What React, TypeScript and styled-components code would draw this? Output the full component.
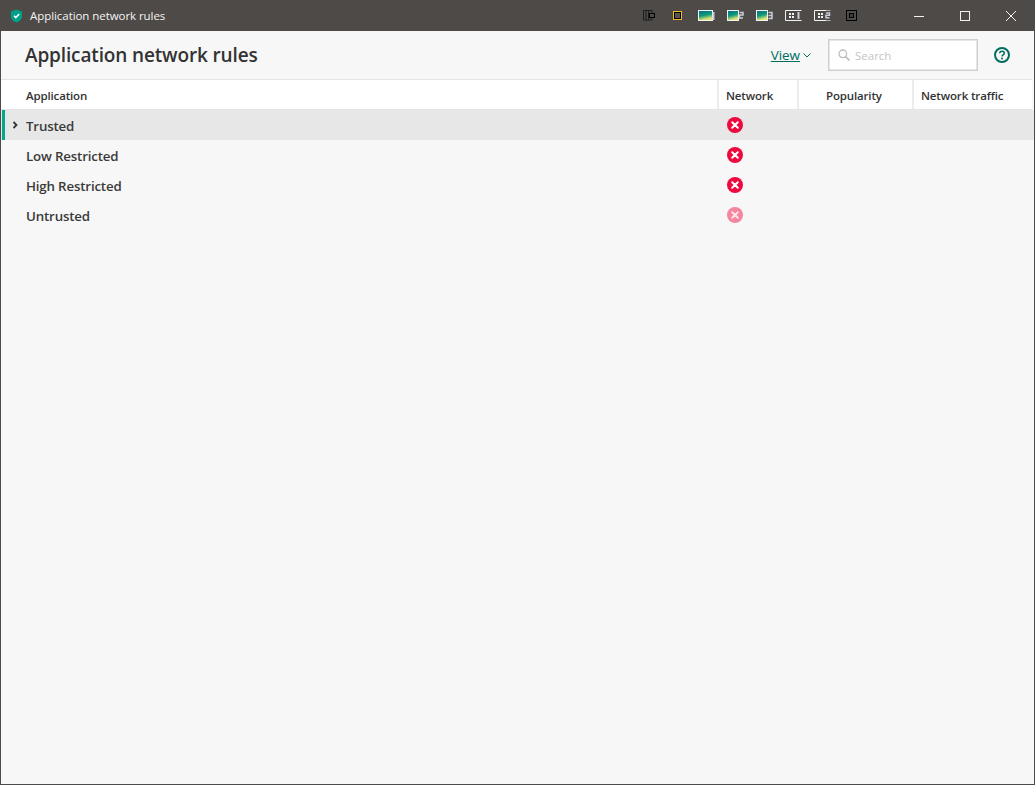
import React from "react";
import styled, { createGlobalStyle } from "styled-components";

const Global = createGlobalStyle`
  html, body { margin: 0; padding: 0; height: 100%; background: #f7f7f7; }
  #root { height: 100%; }
  * { box-sizing: border-box; }
`;

const Win = styled.div`
  width: 1035px;
  height: 785px;
  display: flex;
  flex-direction: column;
  background: #f7f7f7;
  border: 1px solid #4d4a47;
  border-top: 0;
  font-family: "Open Sans", "Noto Sans", sans-serif;
  color: #333;
  overflow: hidden;
`;

const TitleBar = styled.div`
  height: 31px;
  flex: none;
  background: #4d4a47;
  display: flex;
  align-items: center;
  padding-left: 9px;
  color: #f4f4f4;
`;

const TitleText = styled.span`
  margin-left: 7px;
  font-size: 11.5px;
  letter-spacing: -0.06px;
`;

const Tray = styled.div`
  margin-left: auto;
  display: flex;
  align-items: center;
`;

const TraySlot = styled.div`
  width: 29px;
  height: 31px;
  display: flex;
  align-items: center;
  justify-content: center;
`;

const Controls = styled.div`
  margin-left: 30px;
  display: flex;
`;

const ControlBtn = styled.div`
  width: 46px;
  height: 31px;
  display: flex;
  align-items: center;
  justify-content: center;
`;

const Header = styled.div`
  height: 48px;
  flex: none;
  display: flex;
  align-items: center;
  padding-left: 24px;
  padding-right: 24px;
`;

const Heading = styled.h1`
  margin: 0;
  font-size: 19px;
  font-weight: 600;
  letter-spacing: -0.14px;
  color: #333;
`;

const ViewLink = styled.a`
  margin-left: auto;
  font-size: 13.5px;
  color: #006d5f;
  text-decoration: underline;
  letter-spacing: -0.05px;
`;

const ViewChevron = styled.svg`
  margin-left: 3px;
  margin-right: 17px;
`;

const SearchBox = styled.div`
  width: 150px;
  height: 32px;
  background: #fff;
  border: 1px solid #cfcfcf;
  box-shadow: inset 0 0 0 0.5px #cfcfcf;
  display: flex;
  align-items: center;
  padding-left: 9px;
  gap: 5px;
  font-size: 11.5px;
  color: #c4c4c4;
`;

const HelpIcon = styled.svg`
  margin-left: 16px;
`;

const TableHead = styled.div`
  flex: none;
  height: 31px;
  display: flex;
  background: #fff;
  border-top: 1px solid #e4e4e4;
  border-bottom: 1px solid #e4e4e4;
  margin-right: 2px;
  font-size: 11.5px;
  font-weight: 600;
  letter-spacing: -0.15px;
`;

const HeadCell = styled.div<{ $w?: number; $pad?: number }>`
  ${(p) => (p.$w ? `width: ${p.$w}px; flex: none; border-left: 2px solid #ececec;` : "flex: 1;")}
  display: flex;
  align-items: center;
  padding-top: 1px;
  padding-left: ${(p) => p.$pad ?? 7}px;
`;

const Row = styled.div<{ $selected?: boolean }>`
  height: 30px;
  display: flex;
  align-items: center;
  background: ${(p) => (p.$selected ? "#e7e7e7" : "transparent")};
  padding-left: ${(p) => (p.$selected ? 1 : 25)}px;
`;

const Accent = styled.div`
  width: 3px;
  height: 30px;
  background: #00a88e;
  flex: none;
`;

const Chevron = styled.svg`
  margin-left: 7px;
  margin-right: 8px;
  flex: none;
`;

const RowName = styled.span`
  flex: 1;
  padding-top: 2px;
  font-size: 13.3px;
  font-weight: 600;
  letter-spacing: -0.17px;
  color: #3a3a3a;
`;

const StatusCell = styled.div`
  width: 316px;
  flex: none;
  padding-left: 9px;
  display: flex;
  align-items: center;
  margin-top: -1px;
`;

const DenyIcon = ({ faded }: { faded?: boolean }) => (
  <svg width="16" height="16" viewBox="0 0 16 16">
    <circle cx="8" cy="8" r="8" fill={faded ? "#f5859f" : "#ee0a3f"} />
    <path d="M5.200 5.200l5.600 5.600M10.800 5.200l-5.600 5.600" stroke={faded ? "#fbe3e8" : "#fff"} strokeWidth="2" strokeLinecap="round" />
  </svg>
);

const Shield = () => (
  <svg width="13" height="14" viewBox="0 0 13 14">
    <path d="M6.500 0.500L12 2.500V8c0 2.500-2.500 4.200-5.500 5.500C3.500 12.200 1 10.500 1 8V2.500z" fill="#00a088" />
    <path d="M4 6.800l1.800 1.800L9.200 5" stroke="#fff" strokeWidth="1.500" fill="none" />
  </svg>
);

const Photo = ({ n }: { n: number }) => {
  const w = n === 1 ? 13 : 10;
  const id = `ph${n}`;
  return (
    <svg width="17" height="11" viewBox="0 0 17 11">
      <defs>
        <linearGradient id={id} x1="0" y1="0" x2="0.3" y2="1">
          <stop offset="0" stopColor="#0b6f86" />
          <stop offset="0.55" stopColor="#0f9a78" />
          <stop offset="1" stopColor="#e4e676" />
        </linearGradient>
      </defs>
      <rect x="0" y="0" width={w + 2} height="11" fill="#f3f3f6" />
      <rect x="1" y="1" width={w} height="9" fill={`url(#${id})`} />
      {n === 1 ? (
        <path d="M15.500 2v8" stroke="#c9cdd8" strokeWidth="2" />
      ) : n === 2 ? (
        <path d="M12.500 2.500h3.500v2.500h-3.500v3h3.500" stroke="#c9cdd8" strokeWidth="1.500" fill="none" />
      ) : (
        <path d="M12.500 2.500h3.500v6h-3.500M12.500 5.500h3.500" stroke="#c9cdd8" strokeWidth="1.500" fill="none" />
      )}
    </svg>
  );
};

const GridTile = ({ n }: { n: number }) => (
  <svg width="17" height="11" viewBox="0 0 17 11">
    <path d="M12 0.500H0.500v10H12" fill="none" stroke="#f2f2f2" />
    <path d="M12 0.500h4.500M12 10.500h4.500" stroke="#f2f2f2" opacity={n === 1 ? 1 : 0.6} />
    <path d="M4 3h2v2H4zM7 3h2v2H7zM4 6h2v2H4zM7 6h2v2H7z" fill="#f2f2f2" />
    {n === 1 ? (
      <path d="M13.500 2v7" stroke="#c9cdd8" strokeWidth="2" />
    ) : (
      <path d="M12 3h3.500v2.200H12v2.600h3.500" stroke="#c9cdd8" strokeWidth="1.500" fill="none" />
    )}
  </svg>
);

const rows = [
  { name: "Trusted", selected: true },
  { name: "Low Restricted" },
  { name: "High Restricted" },
  { name: "Untrusted", faded: true },
];

export default function App() {
  return (
    <Win>
      <Global />
      <TitleBar>
        <Shield />
        <TitleText>Application network rules</TitleText>
        <Tray>
          <TraySlot>
            <svg width="12" height="11" viewBox="0 0 12 11">
              <path d="M0.500 0.500h8.500v9.500H0.500z M3 1v8.500M5.500 1v8.500" fill="none" stroke="#1c1c1c" />
              <rect x="6.500" y="3.500" width="5" height="4" fill="#4d4a47" stroke="#000" />
            </svg>
          </TraySlot>
          <TraySlot>
            <svg width="9" height="9" viewBox="0 0 9 9">
              <rect x="0.500" y="0.500" width="8" height="8" fill="#000" stroke="#f1b91b" />
              <rect x="2" y="2" width="5" height="5" fill="#555" />
            </svg>
          </TraySlot>
          <TraySlot><Photo n={1} /></TraySlot>
          <TraySlot><Photo n={2} /></TraySlot>
          <TraySlot><Photo n={3} /></TraySlot>
          <TraySlot><GridTile n={1} /></TraySlot>
          <TraySlot><GridTile n={2} /></TraySlot>
          <TraySlot>
            <svg width="11" height="11" viewBox="0 0 11 11">
              <rect x="0.500" y="0.500" width="10" height="10" fill="none" stroke="#000" />
              <rect x="3.500" y="3.500" width="4" height="4" fill="#3b3b3b" stroke="#000" />
            </svg>
          </TraySlot>
        </Tray>
        <Controls>
          <ControlBtn>
            <svg width="10" height="10" viewBox="0 0 10 10"><path d="M0 5.500h10" stroke="#f2f2f2" /></svg>
          </ControlBtn>
          <ControlBtn>
            <svg width="10" height="10" viewBox="0 0 10 10"><rect x="0.500" y="0.500" width="9" height="9" fill="none" stroke="#f2f2f2" /></svg>
          </ControlBtn>
          <ControlBtn>
            <svg width="10" height="10" viewBox="0 0 10 10"><path d="M0 0l10 10M10 0L0 10" stroke="#f2f2f2" /></svg>
          </ControlBtn>
        </Controls>
      </TitleBar>
      <Header>
        <Heading>Application network rules</Heading>
        <ViewLink>View</ViewLink>
        <ViewChevron width="8" height="5" viewBox="0 0 8 5">
          <path d="M0.500 0.500L4 4l3.500-3.500" stroke="#006d5f" fill="none" />
        </ViewChevron>
        <SearchBox>
          <svg width="12" height="12" viewBox="0 0 12 12">
            <circle cx="4.800" cy="4.800" r="3.800" fill="none" stroke="#bdbdbd" strokeWidth="1.300" />
            <path d="M7.600 7.600L11.500 11.500" stroke="#bdbdbd" strokeWidth="1.600" />
          </svg>
          Search
        </SearchBox>
        <HelpIcon width="16" height="16" viewBox="0 0 16 16">
          <circle cx="8" cy="8" r="7" fill="none" stroke="#006d5f" strokeWidth="2" />
          <path d="M5.700 6.300C5.800 4.900 6.800 4.300 8 4.300c1.300 0 2.300.8 2.300 1.900 0 1.700-2.300 1.500-2.300 3.300" fill="none" stroke="#006d5f" strokeWidth="1.500" />
          <circle cx="8" cy="11.500" r="1" fill="#006d5f" />
        </HelpIcon>
      </Header>
      <TableHead>
        <HeadCell $pad={25}>Application</HeadCell>
        <HeadCell $w={80}>Network</HeadCell>
        <HeadCell $w={115} $pad={27}>Popularity</HeadCell>
        <HeadCell $w={120}>Network traffic</HeadCell>
      </TableHead>
      {rows.map((r) => (
        <Row key={r.name} $selected={r.selected}>
          {r.selected && <Accent />}
          {r.selected && (
            <Chevron width="6" height="8" viewBox="0 0 6 8">
              <path d="M1.500 1L4.500 4L1.500 7" stroke="#333" strokeWidth="1.800" fill="none" />
            </Chevron>
          )}
          <RowName>{r.name}</RowName>
          <StatusCell><DenyIcon faded={r.faded} /></StatusCell>
        </Row>
      ))}
    </Win>
  );
}
